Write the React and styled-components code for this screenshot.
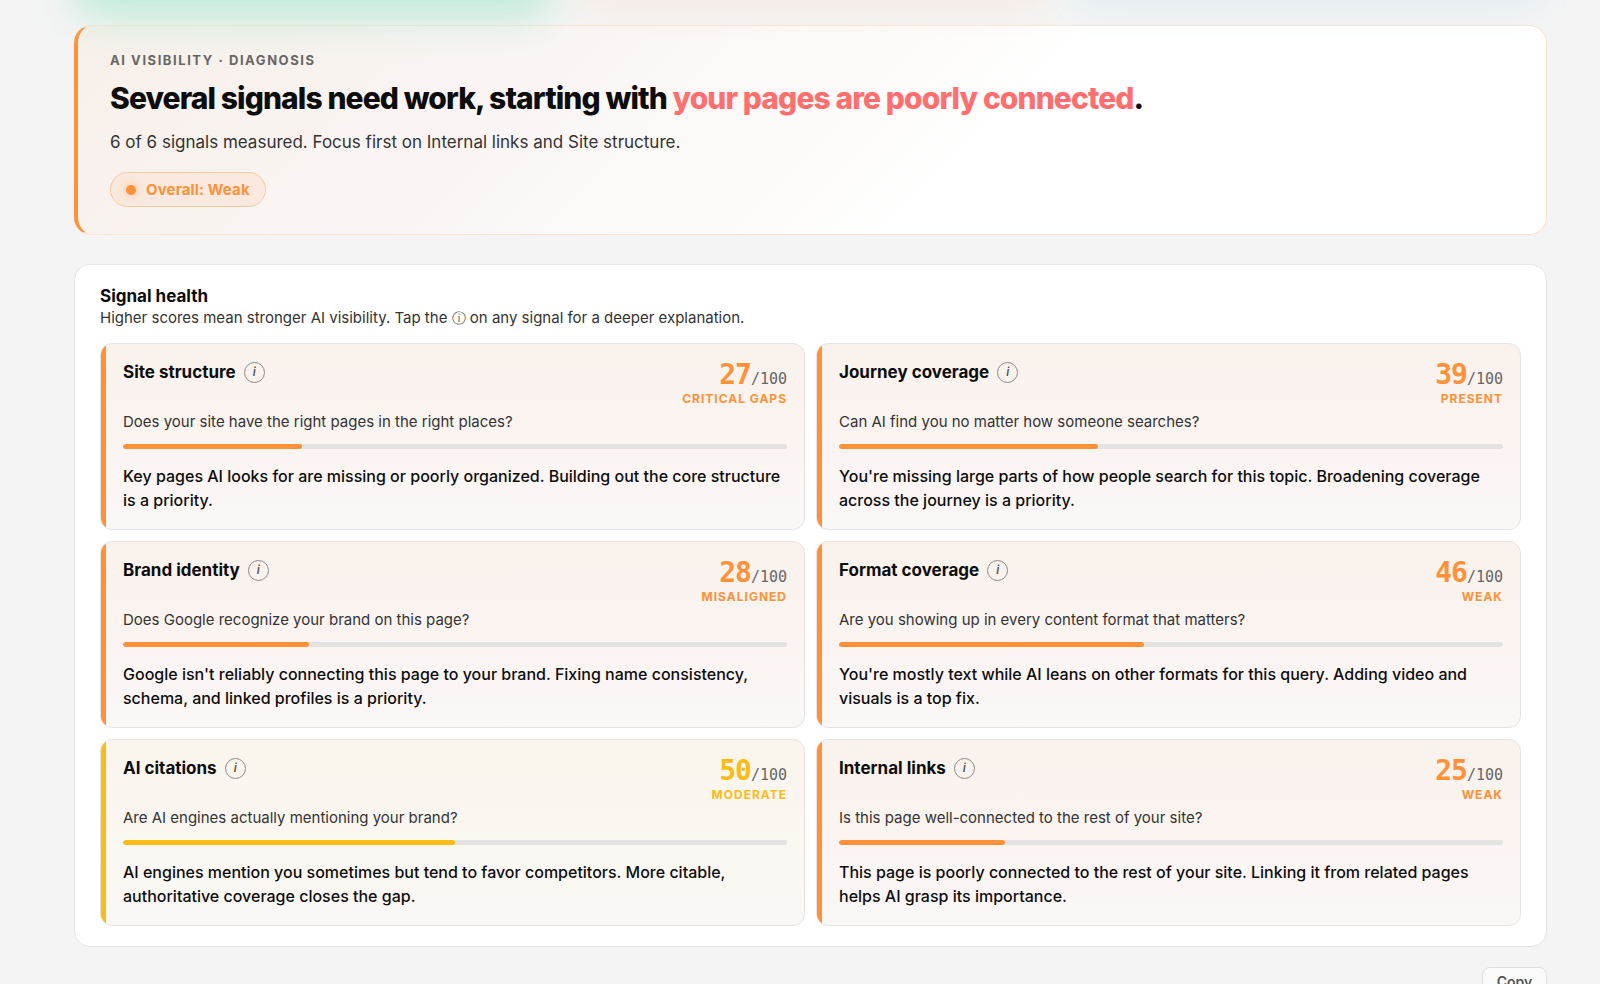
import React from 'react';
import styled, { createGlobalStyle } from 'styled-components';

const GlobalStyle = createGlobalStyle`
  *, *::before, *::after { box-sizing: border-box; }
  body {
    margin: 0;
    background: #f4f4f4;
    color: #0d0d0d;
    font-family: Inter, "Liberation Sans", sans-serif;
  }
  h1, h2, h3, p { margin: 0; }
`;

const Page = styled.main`
  height: 100vh;
  overflow: hidden;
  padding: 0 53px 0 74px;
`;

const GlowRow = styled.div`
  display: grid;
  grid-template-columns: repeat(3, 1fr);
  gap: 20px;
  height: 25px;
`;

const Glow = styled.div`
  height: 100px;
  margin-top: -124px;
  border-radius: 28px;
  box-shadow: 0 ${(p) => p.$drop}px ${(p) => p.$drop}px ${(p) => p.$color};
`;

const Hero = styled.section`
  display: flex;
  flex-direction: column;
  align-items: flex-start;
  padding: 26px 32px 27px;
  border: 1px solid #fde3d0;
  border-left: 4px solid #ff9138;
  border-radius: 18px;
  background:
    linear-gradient(135deg, #f8eee5b3 0%, #fbf5f4d9 30%, #fcfaf8 45%, #ffffff 62%);
`;

const Eyebrow = styled.p`
  font-size: 13px;
  line-height: 16px;
  font-weight: 700;
  letter-spacing: 0.12em;
  color: #666;
`;

const Headline = styled.h1`
  margin-top: 12px;
  font-size: 30px;
  line-height: 36px;
  font-weight: 800;
  letter-spacing: -0.03em;
`;

const Accent = styled.span`
  color: #ff6f6f;
`;

const Summary = styled.p`
  margin-top: 13px;
  font-size: 17px;
  line-height: 26px;
  color: #333;
`;

const Badge = styled.p`
  display: flex;
  align-items: center;
  gap: 10px;
  margin-top: 17px;
  padding: 0 15px;
  height: 35px;
  border: 1px solid #fdc9a0;
  border-radius: 18px;
  background: #fae9df;
  color: #ff9138;
  font-size: 15px;
  font-weight: 700;
  letter-spacing: 0.01em;
`;

const Dot = styled.span`
  width: 10px;
  height: 10px;
  border-radius: 50%;
  background: #ff9138;
  box-shadow: 0 0 10px #ff913880;
`;

const Panel = styled.section`
  margin-top: 29px;
  padding: 20px 25px;
  border: 1px solid #e6e6e6;
  border-radius: 16px;
  background: #fff;
`;

const PanelTitle = styled.h2`
  font-size: 17px;
  line-height: 22px;
  font-weight: 700;
`;

const PanelNote = styled.p`
  font-size: 15px;
  line-height: 22px;
  color: #333;
`;

const InlineInfo = styled.span`
  font-size: 14px;
  line-height: 1;
  color: #555;
`;

const Grid = styled.div`
  display: grid;
  grid-template-columns: 1fr 1fr;
  gap: 11px;
  margin-top: 14px;
`;

const TONES = {
  orange: { main: '#ff9138', tint: '#f9f2ec', mid: '#fbf5f4' },
  yellow: { main: '#fdbb16', tint: '#faf6ed', mid: '#fbf7f2' },
};

const Card = styled.article`
  display: flex;
  overflow: hidden;
  border: 1px solid #e6e4e2;
  border-radius: 12px;
  background: linear-gradient(180deg, ${(p) => p.$tone.tint}, ${(p) => p.$tone.mid} 75%, #f9f8f7);

  &::before {
    content: '';
    flex: none;
    width: 5px;
    background: ${(p) => p.$tone.main};
  }
`;

const CardBody = styled.div`
  flex: 1;
  padding: 16px 17px 17px;
`;

const CardHead = styled.header`
  display: flex;
  justify-content: space-between;
  height: 49px;
`;

const TitleGroup = styled.div`
  display: flex;
  gap: 8px;
  height: 24px;
  align-items: center;
`;

const CardTitle = styled.h3`
  font-size: 17px;
  line-height: 24px;
  font-weight: 700;
`;

const InfoButton = styled.button`
  display: grid;
  place-items: center;
  width: 21px;
  height: 21px;
  padding: 0;
  border: 1px solid #8c8a88;
  border-radius: 50%;
  background: transparent;
  color: #444;
  font: italic 500 12px/1 Inter, sans-serif;
`;

const Score = styled.div`
  text-align: right;
`;

const ScoreValue = styled.p`
  font-family: "DejaVu Sans Mono", monospace;
  font-size: 15px;
  line-height: 30px;
  height: 31px;
  color: #666;
`;

const ScoreNumber = styled.strong`
  font-size: 28px;
  font-weight: 700;
  letter-spacing: -1px;
  color: ${(p) => p.$tone.main};
`;

const Status = styled.p`
  font-size: 12px;
  line-height: 16px;
  font-weight: 700;
  letter-spacing: 1px;
  text-transform: uppercase;
  color: ${(p) => p.$tone.main};
`;

const Question = styled.p`
  margin-top: 2px;
  font-size: 15px;
  line-height: 22px;
  color: #333;
`;

const Track = styled.div`
  height: 5px;
  margin-top: 11px;
  overflow: hidden;
  border-radius: 3px;
  background: #e4e3e1;
`;

const Fill = styled.div`
  height: 100%;
  border-radius: 3px;
  background: ${(p) => p.$tone.main};
`;

const Verdict = styled.p`
  margin-top: 15px;
  font-size: 16px;
  line-height: 24px;
  font-weight: 500;
`;

const Footer = styled.footer`
  display: flex;
  justify-content: flex-end;
  margin-top: 20px;
`;

const CopyButton = styled.button`
  width: 65px;
  height: 30px;
  padding: 0;
  border: 1px solid #dedede;
  border-radius: 8px;
  background: #fafafa;
  color: #555;
  font: 600 14px/20px Inter, sans-serif;
`;

const SIGNALS = [
  { title: 'Site structure', score: 27, status: 'Critical gaps', question: 'Does your site have the right pages in the right places?', verdict: 'Key pages AI looks for are missing or poorly organized. Building out the core structure is a priority.' },
  { title: 'Journey coverage', score: 39, status: 'Present', question: 'Can AI find you no matter how someone searches?', verdict: "You're missing large parts of how people search for this topic. Broadening coverage across the journey is a priority." },
  { title: 'Brand identity', score: 28, status: 'Misaligned', question: 'Does Google recognize your brand on this page?', verdict: "Google isn't reliably connecting this page to your brand. Fixing name consistency, schema, and linked profiles is a priority." },
  { title: 'Format coverage', score: 46, status: 'Weak', question: 'Are you showing up in every content format that matters?', verdict: "You're mostly text while AI leans on other formats for this query. Adding video and visuals is a top fix." },
  { title: 'AI citations', score: 50, status: 'Moderate', tone: 'yellow', question: 'Are AI engines actually mentioning your brand?', verdict: 'AI engines mention you sometimes but tend to favor competitors. More citable, authoritative coverage closes the gap.' },
  { title: 'Internal links', score: 25, status: 'Weak', question: 'Is this page well-connected to the rest of your site?', verdict: 'This page is poorly connected to the rest of your site. Linking it from related pages helps AI grasp its importance.' },
];

function SignalCard({ signal }) {
  const tone = TONES[signal.tone || 'orange'];
  return (
    <Card $tone={tone}>
      <CardBody>
        <CardHead>
          <TitleGroup>
            <CardTitle>{signal.title}</CardTitle>
            <InfoButton type="button" aria-label={`About ${signal.title}`}>i</InfoButton>
          </TitleGroup>
          <Score>
            <ScoreValue><ScoreNumber $tone={tone}>{signal.score}</ScoreNumber>/100</ScoreValue>
            <Status $tone={tone}>{signal.status}</Status>
          </Score>
        </CardHead>
        <Question>{signal.question}</Question>
        <Track><Fill $tone={tone} style={{ width: `${signal.score}%` }} /></Track>
        <Verdict>{signal.verdict}</Verdict>
      </CardBody>
    </Card>
  );
}

export default function App() {
  return (
    <Page>
      <GlobalStyle />
      <GlowRow>
        <Glow $drop={42} $color="#bfead8" />
        <Glow $drop={34} $color="#f5ebe3" />
        <Glow $drop={34} $color="#e2edf2" />
      </GlowRow>
      <Hero>
        <Eyebrow>AI VISIBILITY · DIAGNOSIS</Eyebrow>
        <Headline>Several signals need work, starting with <Accent>your pages are poorly connected</Accent>.</Headline>
        <Summary>6 of 6 signals measured. Focus first on Internal links and Site structure.</Summary>
        <Badge><Dot />Overall: Weak</Badge>
      </Hero>
      <Panel>
        <PanelTitle>Signal health</PanelTitle>
        <PanelNote>Higher scores mean stronger AI visibility. Tap the <InlineInfo>ⓘ</InlineInfo> on any signal for a deeper explanation.</PanelNote>
        <Grid>
          {SIGNALS.map((signal) => <SignalCard key={signal.title} signal={signal} />)}
        </Grid>
      </Panel>
      <Footer><CopyButton type="button">Copy</CopyButton></Footer>
    </Page>
  );
}
